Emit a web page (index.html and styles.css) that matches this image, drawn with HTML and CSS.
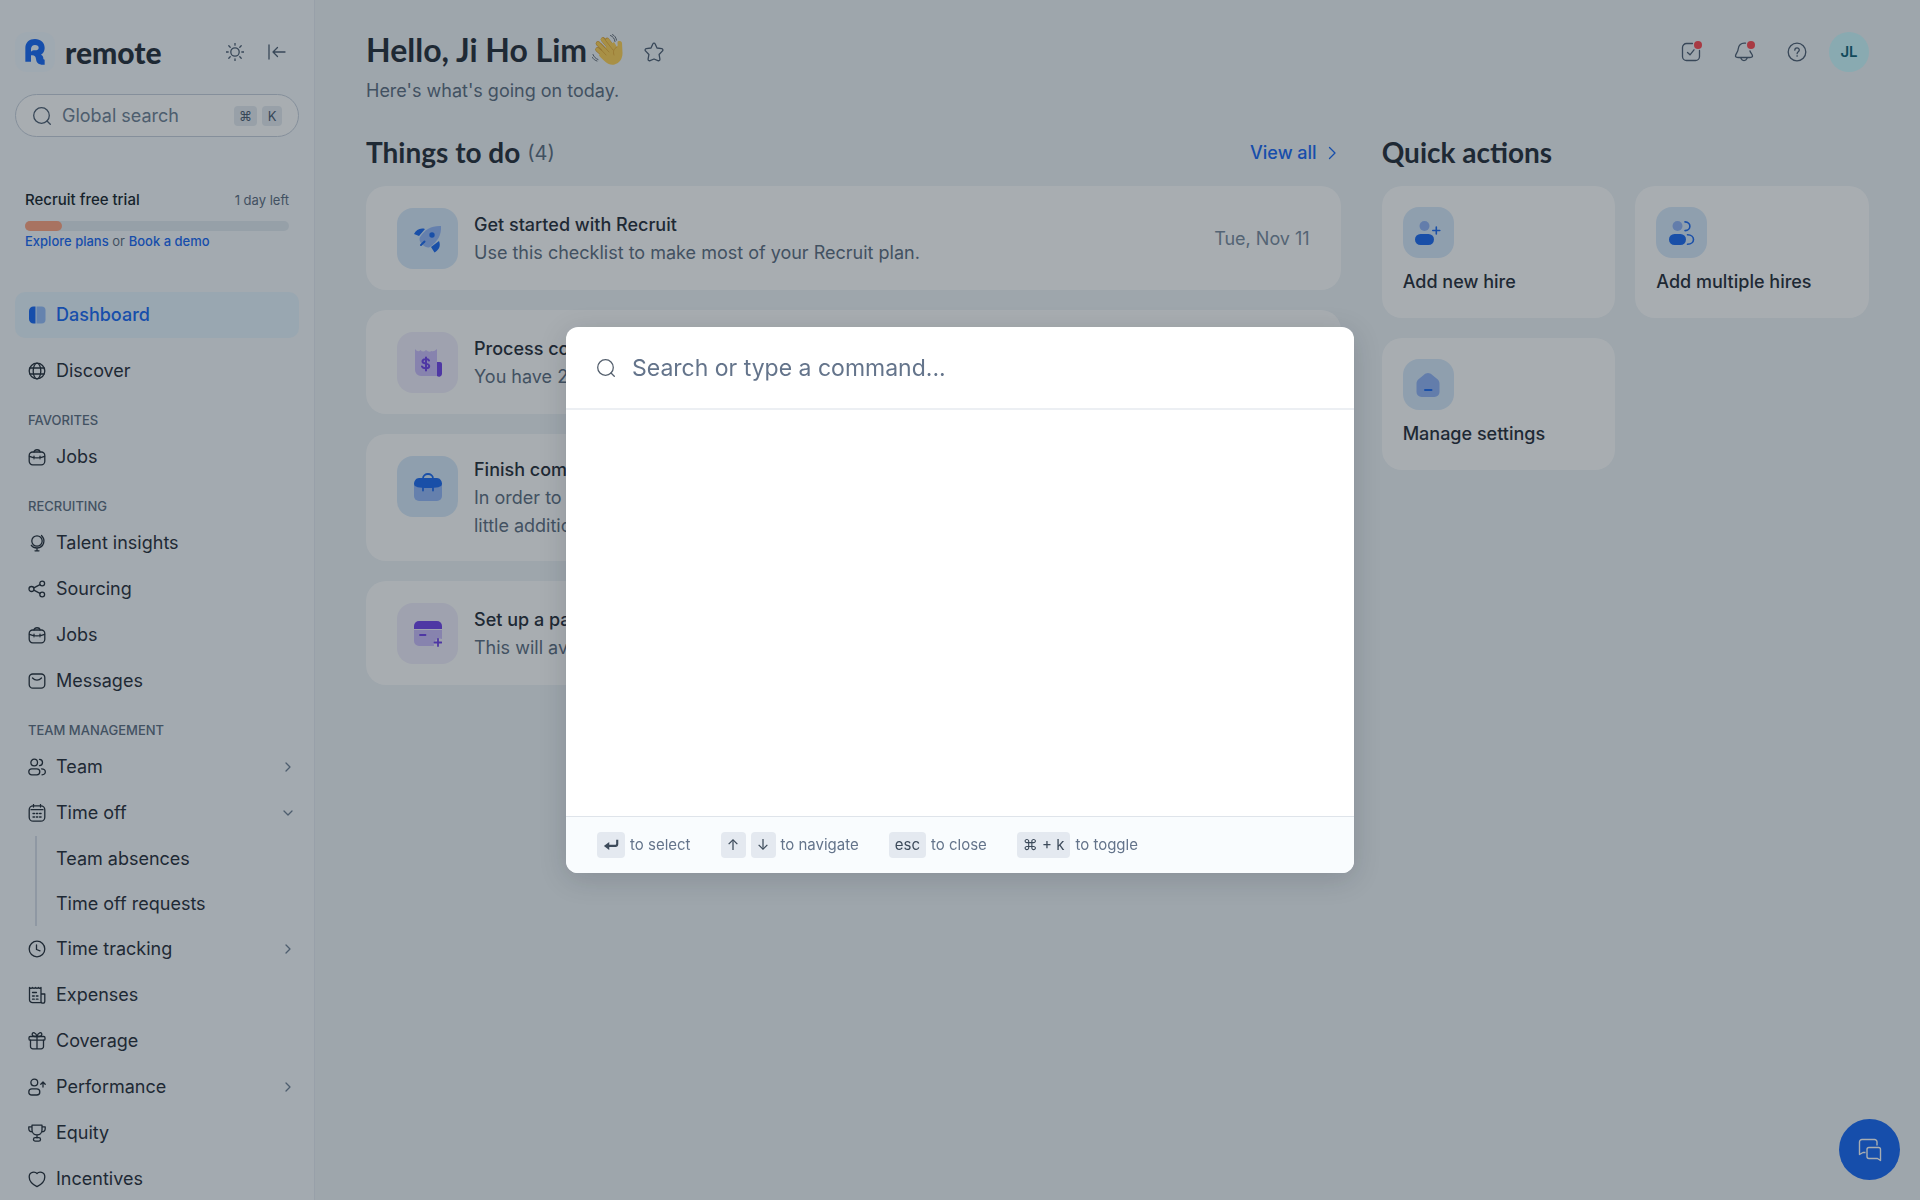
FILE: index.html
```html
<!DOCTYPE html>
<html lang="en">

<head>
  <meta charset="UTF-8">
  <meta name="viewport" content="width=device-width, initial-scale=1.0">
  <title>Dashboard | Remote</title>
  <link rel="stylesheet" href="styles.css">
</head>

<body>
  <!-- Icon sprite -->
  <svg class="sprite" aria-hidden="true">
    <symbol id="i-search" viewBox="0 0 18 18"><circle cx="8.5" cy="8.5" r="7.8"/><path d="M14 14l3.3 3.3"/></symbol>
    <symbol id="i-chevron" viewBox="0 0 18 18"><path d="M7 5l4 4-4 4"/></symbol>
    <symbol id="i-chevron-lg" viewBox="0 0 18 18"><path d="M6.500 3.500L12 9l-5.500 5.500"/></symbol>
    <symbol id="i-chevron-down" viewBox="0 0 18 18"><path d="M5 7l4 4 4-4"/></symbol>
    <symbol id="i-sun" viewBox="0 0 18 18"><circle cx="9" cy="9" r="4.2"/><path d="M9 .2v2M9 15.8v2M.2 9h2M15.8 9h2M2.8 2.8l1.4 1.4M13.8 13.8l1.4 1.4M2.8 15.2l1.4-1.4M13.8 4.2l1.4-1.4"/></symbol>
    <symbol id="i-collapse" viewBox="0 0 18 18"><path d="M1 2v14M17 9H5.5M9.5 4.5L5 9l4.500 4.500"/></symbol>
    <symbol id="i-globe" viewBox="0 0 18 18"><circle cx="9" cy="9" r="7.8"/><ellipse cx="9" cy="9" rx="3.800" ry="7.8"/><path d="M2 6h14M2 12h14"/></symbol>
    <symbol id="i-jobs" viewBox="0 0 18 18"><rect x="1.200" y="4" width="15.600" height="12.800" rx="3.500"/><path d="M6 4c0-3 6-3 6 0M1.500 8.300c4.500 2 10.500 2 15 0M6 8.200v2.600M12 8.200v2.600"/></symbol>
    <symbol id="i-insights" viewBox="0 0 18 18"><circle cx="9" cy="7" r="5.200"/><path d="M13.500 1.500c4.500 4.500 2.500 12-4.500 12.500-2.500 0-4.500-1-5.700-2.700M9 14v2.500M7 16.800h4"/></symbol>
    <symbol id="i-share" viewBox="0 0 18 18"><circle cx="3.500" cy="9" r="2.500"/><circle cx="14.200" cy="3.500" r="2.400"/><circle cx="14.200" cy="14.500" r="2.400"/><path d="M5.800 7.900l6.200-3.300M5.800 10.100l6.200 3.300"/></symbol>
    <symbol id="i-mail" viewBox="0 0 18 18"><rect x="1.200" y="2" width="15.600" height="14.200" rx="3.600"/><path d="M4.500 6c2.700 2.800 6.300 2.800 9 0"/></symbol>
    <symbol id="i-team" viewBox="0 0 18 18"><circle cx="6.200" cy="4.500" r="3.300"/><rect x=".8" y="10.800" width="11" height="6" rx="3"/><path d="M11.500 1.300c4 .2 4 6.200 0 6.400M13.500 10.800c5 0 5 6 .5 6"/></symbol>
    <symbol id="i-calendar" viewBox="0 0 18 18"><rect x="1.200" y="1.800" width="15.600" height="15.400" rx="4"/><path d="M5.500 .5v2.500M12.500 .5v2.500M3 5.700h12"/><path d="M5 9.500h1.500M8.300 9.500h1.500M11.600 9.500h1.500M5 13h1.500M8.300 13h1.500M11.600 13h1.500"/></symbol>
    <symbol id="i-clock" viewBox="0 0 18 18"><circle cx="9" cy="9" r="7.800"/><path d="M8.500 5v4.500l3.500 1.300"/></symbol>
    <symbol id="i-expenses" viewBox="0 0 18 18"><path d="M1.500 1.500c1 1 2 1 3 0 1 1 2 1 3 0 1 1 2 1 3 0 .8 1 1.500 1 2.500 0v15.200H4.500a3 3 0 0 1-3-3zM13 8h3.800v7.200a1.500 1.500 0 0 1-3.800 0M4.500 6.500h4M4.500 10h1.800M8.300 10H10M4.500 13.200h1.800M8.300 13.200H10"/></symbol>
    <symbol id="i-gift" viewBox="0 0 18 18"><rect x="1" y="4.500" width="16" height="3.700" rx="1.200"/><path d="M2.500 8.200v6.300a2.300 2.300 0 0 0 2.300 2.300h8.400a2.300 2.300 0 0 0 2.300-2.300V8.200M9 4.500v12.300M9 4.500C8 0 4.500-.2 4.200 2.200 4 4 6 4.500 9 4.500zM9 4.500c1-4.500 4.500-4.700 4.800-2.300.2 1.800-1.800 2.300-4.800 2.300z"/></symbol>
    <symbol id="i-performance" viewBox="0 0 18 18"><circle cx="6.300" cy="4.500" r="3.400"/><rect x=".8" y="10.800" width="11" height="6.200" rx="3.100"/><path d="M15 9V4M12.800 6.200L15 4l2.200 2.200"/></symbol>
    <symbol id="i-trophy" viewBox="0 0 18 18"><path d="M4 1.200h10V6c0 6.500-10 6.500-10 0zM4 2.800H.8v2c0 2 1.200 3 3.500 3M14 2.800h3.200v2c0 2-1.200 3-3.500 3M9 10.800v3"/><rect x="5.500" y="13.600" width="7" height="3.500" rx="1.700"/></symbol>
    <symbol id="i-heart" viewBox="0 0 18 18"><path d="M9 3.500C7 1.300 1.200 1.500 1.200 7c0 4.500 4.500 8 7.800 9.700 3.300-1.700 7.800-5.200 7.800-9.700C16.800 1.500 11 1.300 9 3.500z"/></symbol>
    <symbol id="i-star" viewBox="0 0 20 20"><path d="M8.900 1.800c.4-1 1.800-1 2.200 0L13 6l4.800.7c1.100.2 1.500 1.500.7 2.200L15.100 12.500l.8 4.700c.2 1.200-1 1.900-2 1.400L10 17l-3.900 1.600c-1 .5-2.200-.2-2-1.400l.8-4.700L1.500 8.900C.7 8.200 1.100 6.900 2.200 6.700L7 6z"/></symbol>
    <symbol id="i-task" viewBox="0 0 20 20"><path d="M11.500 1.500H5.500a4 4 0 0 0-4 4v9a4 4 0 0 0 4 4h9a4 4 0 0 0 4-4V8.500M6.500 10.500l2.500 2.300 4-5"/></symbol>
    <symbol id="i-bell" viewBox="0 0 20 20"><path d="M11.500 1.200C7 .5 4.500 3.500 4.200 7c-.2 3-2.700 5-2.700 7 0 1.500 2 1.500 3 1.500h11c1.500 0 3-.2 3-1.500 0-1.700-2-3-2.500-5M7 16.500c1.200 2.700 4.800 2.700 6 0"/></symbol>
    <symbol id="i-help" viewBox="0 0 20 20"><circle cx="10" cy="10" r="8.800"/><path d="M7.800 8.200c0-3 4.500-2.900 4.500-.2 0 1.800-2.200 1.700-2.200 3.700M10.100 13.700v.5"/></symbol>
    <symbol id="i-enter" viewBox="0 0 18 14"><path d="M16 1v5a2 2 0 0 1-2 2H5" stroke-width="2.400"/><path d="M1 8l6-4.500v9z" fill="currentColor" stroke="none"/></symbol>
  </svg>

  <div class="layout">
    <aside class="sidebar">
      <div class="brand">
        <a class="brand-link" href="#">
          <span class="brand-tile">
            <svg class="brand-mark" viewBox="0 0 58 78" aria-hidden="true"><path fill="currentColor" fill-rule="evenodd" d="M0 68V27C0 10 12 0 29 0s29 11 29 27c0 9-4 16-11 20 6 3 7 7 7 11 0 3 1 4 4 4v15c-16 2-25-5-26-17-1-7-4-11-11-11h-4v19zM29 18c-7 0-12 5-12 12v8c3-3 7-4 11-4 8 0 12-2 12-8 0-5-4-8-11-8z"/></svg>
          </span>
          <span class="brand-name">remote</span>
        </a>
        <button class="icon-btn" aria-label="Theme"><svg class="icon"><use href="#i-sun"/></svg></button>
        <button class="icon-btn" aria-label="Collapse"><svg class="icon"><use href="#i-collapse"/></svg></button>
      </div>

      <button class="search-btn">
        <svg class="icon"><use href="#i-search"/></svg>
        <span class="search-label">Global search</span>
        <kbd>⌘</kbd>
        <kbd>K</kbd>
      </button>

      <div class="trial">
        <div class="trial-head">
          <span class="trial-title">Recruit free trial</span>
          <span>1 day left</span>
        </div>
        <div class="trial-bar"><div class="trial-fill" style="width: 14%"></div></div>
        <div><a href="#">Explore plans</a> or <a href="#">Book a demo</a></div>
      </div>

      <nav class="nav">
        <a class="nav-item active" href="#">
          <svg class="icon-solid" viewBox="0 0 18 18"><path d="M7.500 .5H5.500a4.500 4.500 0 0 0-4.500 4.500v8a4.500 4.500 0 0 0 4.500 4.500h2z"/><path opacity=".4" d="M8.500 .5h5a4 4 0 0 1 4 4v9a4 4 0 0 1-4 4h-5z"/></svg>
          Dashboard
        </a>
        <a class="nav-item" href="#"><svg class="icon"><use href="#i-globe"/></svg>Discover</a>

        <h2 class="nav-title">Favorites</h2>
        <a class="nav-item" href="#"><svg class="icon"><use href="#i-jobs"/></svg>Jobs</a>

        <h2 class="nav-title">Recruiting</h2>
        <a class="nav-item" href="#"><svg class="icon"><use href="#i-insights"/></svg>Talent insights</a>
        <a class="nav-item" href="#"><svg class="icon"><use href="#i-share"/></svg>Sourcing</a>
        <a class="nav-item" href="#"><svg class="icon"><use href="#i-jobs"/></svg>Jobs</a>
        <a class="nav-item" href="#"><svg class="icon"><use href="#i-mail"/></svg>Messages</a>

        <h2 class="nav-title">Team management</h2>
        <a class="nav-item" href="#"><svg class="icon"><use href="#i-team"/></svg>Team<svg class="icon arrow"><use href="#i-chevron"/></svg></a>
        <a class="nav-item" href="#"><svg class="icon"><use href="#i-calendar"/></svg>Time off<svg class="icon arrow"><use href="#i-chevron-down"/></svg></a>
        <div class="subnav">
          <a href="#">Team absences</a>
          <a href="#">Time off requests</a>
        </div>
        <a class="nav-item" href="#"><svg class="icon"><use href="#i-clock"/></svg>Time tracking<svg class="icon arrow"><use href="#i-chevron"/></svg></a>
        <a class="nav-item" href="#"><svg class="icon"><use href="#i-expenses"/></svg>Expenses</a>
        <a class="nav-item" href="#"><svg class="icon"><use href="#i-gift"/></svg>Coverage</a>
        <a class="nav-item" href="#"><svg class="icon"><use href="#i-performance"/></svg>Performance<svg class="icon arrow"><use href="#i-chevron"/></svg></a>
        <a class="nav-item" href="#"><svg class="icon"><use href="#i-trophy"/></svg>Equity</a>
        <a class="nav-item" href="#"><svg class="icon"><use href="#i-heart"/></svg>Incentives</a>
      </nav>
    </aside>

    <main class="main">
      <header class="topbar">
        <div class="welcome">
          <div class="welcome-title">
            <h1>Hello, Ji Ho Lim</h1>
            <svg class="wave" viewBox="0 0 32 32" aria-hidden="true">
              <g fill="none" stroke-linecap="round" stroke="#dd9f2c" stroke-width="4.600">
                <path d="M5.500 15.500l9 8M6 9.500l11 11M11 5.500l10 12"/>
                <path d="M15 6l7 9"/>
              </g>
              <path fill="#ffcf4d" d="M9 17l13-9 3 5c1-1 .5-3 .5-4.500 0-2 4-2 4.500.5l.5 10c0 6-3 10-8 11.500-6 1.500-11-4-15.500-9z"/>
              <g fill="none" stroke-linecap="round" stroke="#ffcf4d" stroke-width="3.400">
                <path d="M5.500 15.500l9 8M6 9.500l11 11M10.500 5.500l10 12M15.500 6l7 9"/>
              </g>
              <path fill="none" stroke="#e3a32b" stroke-width=".8" stroke-linecap="round" d="M8 14.500l6 6.500M9 9.500l8 8.500M14 7l7 9M25 13c-4 2-4 5-3 8"/>
              <path fill="none" stroke="#5b6470" stroke-width="1" stroke-linecap="round" d="M18.500 1.500c2.500 1 4 3 4.500 6M20.500 .6c2.500 1.200 3.500 3 4 5.500M1 20.500c1 2.500 2.500 4 5 5M.5 23.500c1 1.800 2.500 3 4.500 3.500"/>
            </svg>
            <button class="icon-btn" aria-label="Add to favorites"><svg class="icon icon-lg"><use href="#i-star"/></svg></button>
          </div>
          <p>Here's what's going on today.</p>
        </div>
        <div class="actions">
          <button class="icon-btn has-dot" aria-label="Tasks"><svg class="icon icon-lg"><use href="#i-task"/></svg></button>
          <button class="icon-btn has-dot" aria-label="Notifications"><svg class="icon icon-lg"><use href="#i-bell"/></svg></button>
          <button class="icon-btn" aria-label="Help"><svg class="icon icon-lg"><use href="#i-help"/></svg></button>
          <button class="avatar">JL</button>
        </div>
      </header>

      <div class="columns">
        <section>
          <div class="section-head">
            <h2>Things to do</h2>
            <span class="count">(4)</span>
            <a class="view-all" href="#">View all <svg class="icon"><use href="#i-chevron-lg"/></svg></a>
          </div>
          <div class="todo-list">
            <article class="card todo">
              <div class="tile">
                <svg viewBox="0 0 28 28"><path fill="#90b4f8" d="M27 1c.5 9-3 15-11 21-2 1-4 .5-6-1l-3-3c-1.500-2-2-4-1-6C11 4 18 .5 27 1z"/><path fill="#1263f0" d="M0 9c2-4 6-6.500 11-5L5 11zM25 16c2 5 0 9-4.500 11.500L17 22z"/><path d="M7 20l3.500-3.500" stroke="#1263f0" stroke-width="2" stroke-linecap="round"/><circle cx="18" cy="10" r="2.700" fill="#1263f0"/></svg>
              </div>
              <div class="todo-text">
                <h3>Get started with Recruit</h3>
                <p>Use this checklist to make most of your Recruit plan.</p>
              </div>
              <time>Tue, Nov 11</time>
            </article>
            <article class="card todo">
              <div class="tile purple">
                <svg viewBox="0 0 28 28"><path fill="#c8b9fa" d="M1 0q3 4 5.500 1 2.500 3 5.500 0 3 3 5.500 1Q20 3 23 0v27H7a6 6 0 0 1-6-6z"/><path fill="#6a3bea" d="M23 13h3a2 2 0 0 1 2 2v10a3 3 0 0 1-5 2z"/><path fill="none" stroke="#6a3bea" stroke-width="2" stroke-linecap="round" d="M15 11.500c-1-2-6.500-2-6.500 1s6.700 1.200 6.700 4.500c0 3-6 3-7.200.5M12 8.500v13"/></svg>
              </div>
              <div class="todo-text">
                <h3>Process contractor invoices</h3>
                <p>You have 2 invoices to review.</p>
              </div>
            </article>
            <article class="card todo">
              <div class="tile">
                <svg viewBox="0 0 28 28"><path fill="#90b4f8" d="M0 12h28v11a5 5 0 0 1-5 5H5a5 5 0 0 1-5-5z"/><path fill="#1263f0" d="M5 5h18c3 0 5 3 5 6s-5 4-14 4-14-1-14-4 2-6 5-6z"/><path fill="none" stroke="#1263f0" stroke-width="1.800" stroke-linecap="round" d="M9 5.500c0-6 10-6 10 0M9 13v4.500M19 13v4.500"/></svg>
              </div>
              <div class="todo-text">
                <h3>Finish company setup</h3>
                <p>In order to get your company ready we need a<br>little additional information from you.</p>
              </div>
            </article>
            <article class="card todo">
              <div class="tile purple">
                <svg viewBox="0 0 28 28"><path fill="#6a3bea" d="M5 1h18a5 5 0 0 1 5 5v3H0V6a5 5 0 0 1 5-5z"/><path fill="#c8b9fa" d="M0 10h28v9a6 6 0 0 0-8 7H5a5 5 0 0 1-5-5z"/><path stroke="#6a3bea" stroke-width="1.800" stroke-linecap="round" d="M6 15h5.500M20.500 22.500h7M24 19v7"/></svg>
              </div>
              <div class="todo-text">
                <h3>Set up a payment method</h3>
                <p>This will avoid delays in payments.</p>
              </div>
            </article>
          </div>
        </section>

        <section>
          <div class="section-head">
            <h2>Quick actions</h2>
          </div>
          <div class="quick-grid">
            <a class="card quick" href="#">
              <span class="tile tile-sm">
                <svg viewBox="0 0 26 24"><circle cx="9.500" cy="5" r="5" fill="#8cb0f6"/><rect x="0" y="13" width="19" height="11" rx="5.500" fill="#1263f0"/><path stroke="#1263f0" stroke-width="1.600" stroke-linecap="round" d="M17.800 9.500h7M21.300 6v7"/></svg>
              </span>
              Add new hire
            </a>
            <a class="card quick" href="#">
              <span class="tile tile-sm">
                <svg viewBox="0 0 26 24"><circle cx="8.500" cy="5" r="5" fill="#8cb0f6"/><rect x="0" y="13" width="17" height="11" rx="5.500" fill="#1263f0"/><path fill="none" stroke="#1263f0" stroke-width="1.600" stroke-linecap="round" d="M16 .9c6.500 0 6.500 8.600 0 8.700M18.500 13.800c8 0 8 9.400 0 9.400"/></svg>
              </span>
              Add multiple hires
            </a>
            <a class="card quick" href="#">
              <span class="tile tile-sm">
                <svg viewBox="0 0 26 24"><path fill="#8cb0f6" d="M13 0c1.500 0 3 .8 4 1.800l5.500 4.500c1.500 1.500 2 2.700 2 4.700v8a5 5 0 0 1-5 5h-13a5 5 0 0 1-5-5v-8c0-2 .5-3.200 2-4.700L9 1.800C10 .8 11.500 0 13 0z"/><path stroke="#1263f0" stroke-width="2" stroke-linecap="round" d="M10 17h6.500"/></svg>
              </span>
              Manage settings
            </a>
          </div>
        </section>
      </div>
    </main>
  </div>

  <button class="chat-btn" aria-label="Open chat">
    <svg viewBox="0 0 24 24"><path d="M19 7.500V4a2.500 2.500 0 0 0-2.500-2.500H4A2.500 2.500 0 0 0 1.500 4v12.500L5 14.500h2.500"/><path d="M11 9.500h9.500a2 2 0 0 1 2 2v11l-3-2H11a2 2 0 0 1-2-2v-7a2 2 0 0 1 2-2z"/></svg>
  </button>

  <!-- Command palette -->
  <div class="backdrop">
    <div class="palette" role="dialog" aria-modal="true" aria-label="Command palette">
      <label class="palette-search">
        <svg class="icon"><use href="#i-search"/></svg>
        <input type="text" placeholder="Search or type a command..." aria-label="Search or type a command">
      </label>
      <div class="palette-results"></div>
      <footer class="palette-footer">
        <span class="hint"><kbd><svg class="enter"><use href="#i-enter"/></svg></kbd>to select</span>
        <span class="hint"><kbd class="key">↑</kbd><kbd class="key">↓</kbd>to navigate</span>
        <span class="hint"><kbd>esc</kbd>to close</span>
        <span class="hint"><kbd>⌘ + k</kbd>to toggle</span>
      </footer>
    </div>
  </div>
</body>

</html>
```

FILE: styles.css
```css
* {
  margin: 0;
  padding: 0;
  box-sizing: border-box;
}

body {
  font-family: Inter, sans-serif;
  font-size: 18px;
  line-height: 28px;
  background: #eef3f7;
  color: #1a2430;
  overflow: hidden;
}

a {
  color: #0d61f5;
  text-decoration: none;
}

button {
  font: inherit;
  color: inherit;
  background: none;
  border: none;
  cursor: pointer;
}

kbd {
  font: inherit;
}

.sprite {
  display: none;
}

.icon {
  width: 18px;
  height: 18px;
  flex-shrink: 0;
  fill: none;
  stroke: currentColor;
  stroke-width: 1.3;
  stroke-linecap: round;
  stroke-linejoin: round;
  overflow: visible;
}

.icon-lg {
  width: 20px;
  height: 20px;
}

.icon-btn {
  display: flex;
  color: #45566b;
}

.layout {
  display: flex;
  height: 100vh;
}

/* Sidebar */
.sidebar {
  width: 315px;
  flex-shrink: 0;
  padding: 32px 15px 0;
  background: #f7fafd;
  border-right: 1px solid #e4eaf2;
  overflow: hidden;
}

.brand {
  display: flex;
  align-items: center;
  gap: 24px;
  padding-right: 13px;
}

.brand-link {
  display: flex;
  align-items: center;
  gap: 10px;
  flex: 1;
  color: inherit;
}

.brand-tile {
  display: flex;
  align-items: center;
  justify-content: center;
  width: 40px;
  height: 40px;
  border-radius: 12px;
  background: #f1f8ff;
  color: #0d61f5;
}

.brand-mark {
  width: 20px;
  height: 26px;
}

.brand-name {
  font-family: Lato, sans-serif;
  font-size: 30px;
  font-weight: 900;
}

.search-btn {
  display: flex;
  align-items: center;
  gap: 5px;
  width: 100%;
  height: 43px;
  margin-top: 22px;
  padding: 0 16px 0 17px;
  border: 1px solid #c5cedb;
  border-radius: 22px;
  background: #fff;
  color: #45566b;
}

.search-label {
  flex: 1;
  padding-left: 6px;
  text-align: left;
  color: #687b90;
}

.search-btn kbd {
  min-width: 20px;
  padding: 0 5px;
  border-radius: 4px;
  background: #e4eaf1;
  font-size: 13px;
  line-height: 20px;
}

.trial {
  margin-top: 49px;
  padding: 0 10px;
  font-size: 13px;
  line-height: 20px;
  color: #55677b;
}

.trial a {
  font-weight: 500;
}

.trial-head {
  display: flex;
  justify-content: space-between;
  align-items: center;
  height: 28px;
}

.trial-title {
  font-size: 15px;
  font-weight: 500;
  color: #0c1622;
}

.trial-bar {
  height: 10px;
  margin-top: 7px;
  border-radius: 5px;
  background: #e2e9f1;
}

.trial-fill {
  height: 100%;
  border-radius: 5px;
  background: #ff9f7a;
}

.nav {
  margin-top: 41px;
}

.nav-item {
  display: flex;
  align-items: center;
  gap: 10px;
  height: 46px;
  padding: 0 2px 0 13px;
  border-radius: 10px;
  color: #1a2430;
}

.nav-item.active {
  margin-bottom: 10px;
  background: #e6f5ff;
  color: #0d61f5;
  font-weight: 500;
}

.icon-solid {
  width: 18px;
  height: 18px;
  fill: currentColor;
}

.arrow {
  margin-left: auto;
  color: #687b90;
}

.nav-title {
  padding: 18px 13px 6px;
  font-size: 13px;
  font-weight: 500;
  line-height: 16px;
  text-transform: uppercase;
  color: #55677b;
}

.subnav {
  margin-left: 20px;
  padding-left: 19px;
  border-left: 2px solid #d5dde8;
}

.subnav a {
  display: block;
  line-height: 45px;
  color: inherit;
}

/* Main */
.main {
  flex: 1;
  padding: 32px 51px 0;
}

h1,
.section-head h2 {
  font-family: Lato, sans-serif;
  font-weight: 700;
}

.topbar {
  display: flex;
  justify-content: space-between;
  align-items: flex-start;
}

.welcome-title {
  display: flex;
  align-items: center;
  height: 40px;
}

h1 {
  margin-bottom: 4px;
  font-size: 32px;
  line-height: 36px;
}

.wave {
  width: 32px;
  height: 32px;
  margin: 0 20px 4px 5px;
}

.welcome p {
  margin-top: 5px;
  color: #55677b;
}

.actions {
  display: flex;
  align-items: center;
  gap: 33px;
}

.has-dot {
  position: relative;
}

.has-dot::after {
  content: '';
  position: absolute;
  top: -1px;
  right: -1px;
  width: 8px;
  height: 8px;
  border-radius: 50%;
  background: #ff4048;
}

.avatar {
  width: 40px;
  height: 40px;
  margin-left: -11px;
  border-radius: 50%;
  background: #cbfbff;
  color: #055a70;
  font-size: 15px;
  font-weight: 600;
}

.columns {
  display: grid;
  grid-template-columns: 2fr 1fr;
  gap: 41px;
  margin-top: 32px;
}

.section-head {
  display: flex;
  align-items: center;
  gap: 7px;
  height: 32px;
  margin-bottom: 17px;
}

.section-head h2 {
  margin-bottom: 3px;
  font-size: 28px;
}

.count {
  font-size: 20px;
  color: #55677b;
}

.view-all {
  display: flex;
  align-items: center;
  gap: 6px;
  margin-left: auto;
  font-weight: 500;
}

.card {
  border-radius: 20px;
  background: #fff;
}

.todo-list {
  display: grid;
  gap: 20px;
}

.todo {
  display: flex;
  align-items: flex-start;
  gap: 16px;
  padding: 22px 31px 21px;
}

.tile {
  display: flex;
  align-items: center;
  justify-content: center;
  flex-shrink: 0;
  width: 61px;
  height: 61px;
  border-radius: 16px;
  background: #d6e8fb;
}

.tile svg {
  width: 28px;
  height: 28px;
}

.tile.purple {
  background: #f0edfc;
}

.todo-text {
  flex: 1;
  align-self: center;
}

h3 {
  font-size: 18px;
  font-weight: 500;
}

.todo p {
  color: #55677b;
}

.todo time {
  align-self: center;
  color: #73869a;
}

.quick-grid {
  display: grid;
  grid-template-columns: 1fr 1fr;
  gap: 20px;
}

.quick {
  display: grid;
  gap: 10px;
  padding: 21px 21px 22px;
  color: inherit;
  font-weight: 500;
}

.tile-sm {
  width: 51px;
  height: 51px;
}

.tile-sm svg {
  width: 26px;
  height: 24px;
}

.chat-btn {
  position: fixed;
  right: 20px;
  bottom: 20px;
  display: flex;
  align-items: center;
  justify-content: center;
  width: 61px;
  height: 61px;
  border-radius: 50%;
  background: #0d61f5;
}

.chat-btn svg {
  width: 24px;
  height: 24px;
  fill: none;
  stroke: #fff;
  stroke-width: 1.4;
  stroke-linejoin: round;
}

/* Command palette */
.backdrop {
  position: fixed;
  inset: 0;
  display: flex;
  align-items: center;
  justify-content: center;
  background: rgba(38, 50, 60, 0.4);
}

.palette {
  width: 100%;
  max-width: 788px;
  border-radius: 12px;
  background: #fff;
  box-shadow: 0 6px 28px rgba(20, 25, 40, 0.16);
  overflow: hidden;
}

.palette-search {
  display: flex;
  align-items: center;
  gap: 17px;
  padding: 0 31px;
  border-bottom: 2px solid #eceff3;
  color: #55606e;
}

.palette-search input {
  flex: 1;
  height: 81px;
  border: none;
  outline: none;
  font: inherit;
  font-size: 23px;
}

.palette-search input::placeholder {
  color: #64748b;
}

.palette-results {
  height: 406px;
}

.palette-footer {
  display: flex;
  align-items: center;
  gap: 30px;
  height: 57px;
  padding: 0 31px;
  border-top: 1px solid #dfe4ea;
  background: #f9fcfe;
  font-size: 15px;
  color: #64748b;
}

.hint {
  display: flex;
  align-items: center;
  gap: 5px;
}

.hint kbd {
  display: flex;
  align-items: center;
  height: 26px;
  padding: 0 6px;
  border-radius: 4px;
  background: #e4e9f0;
  color: #3c4a5a;
}

.hint .key {
  justify-content: center;
  width: 25px;
}

.enter {
  width: 16px;
  height: 14px;
  fill: none;
  stroke: currentColor;
}
```
